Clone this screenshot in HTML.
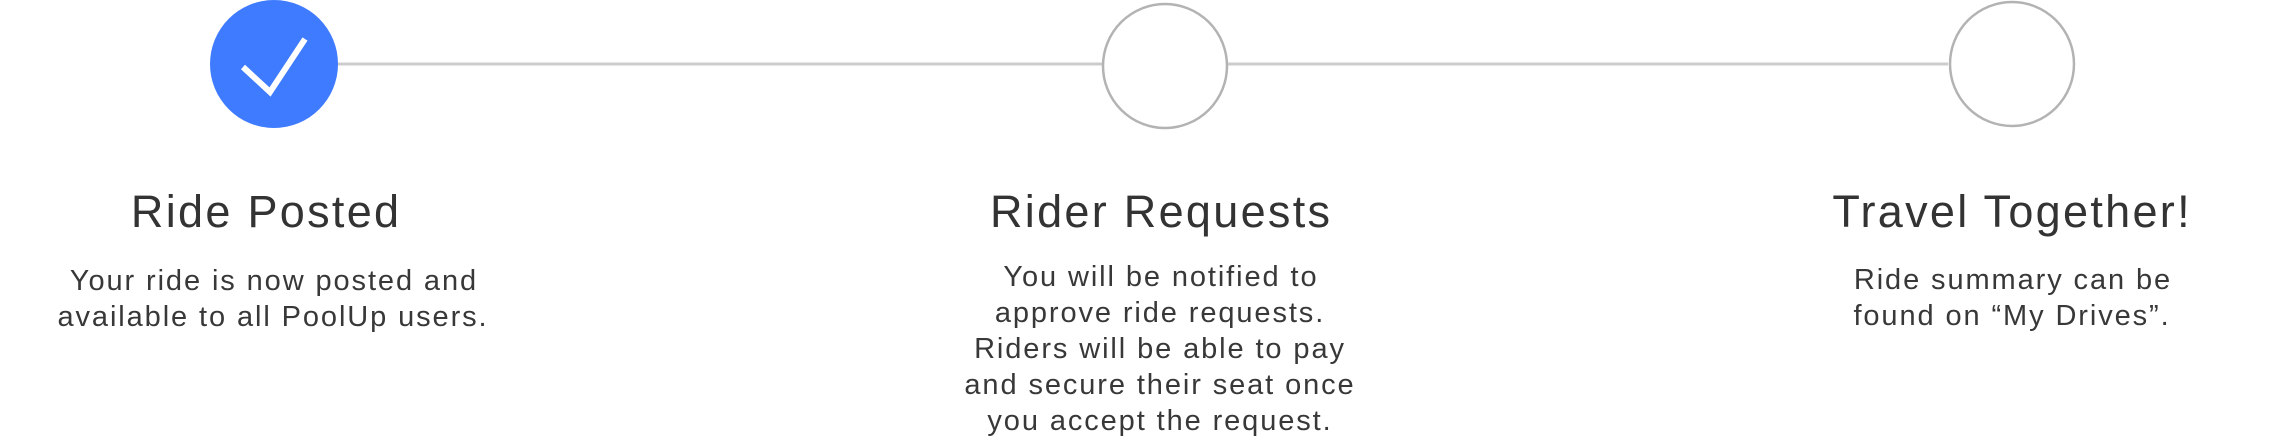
<!DOCTYPE html>
<html><head><meta charset="utf-8"><style>
html,body{margin:0;padding:0;background:#fff;width:2277px;height:447px;overflow:hidden;position:relative;font-family:"Liberation Sans",sans-serif;color:#333}
.t{position:absolute;width:700px;text-align:center;font-size:45px;line-height:50px;letter-spacing:2.3px;text-indent:2.3px}
.b{position:absolute;width:700px;text-align:center;font-size:29px;line-height:36px;letter-spacing:1.9px;text-indent:1.9px;color:#383838}
</style></head><body>
<svg width="2277" height="447" style="position:absolute;left:0;top:0">
<line x1="338" y1="64" x2="1102" y2="64" stroke="#cccccc" stroke-width="3"/>
<line x1="1228" y1="64" x2="1948" y2="64" stroke="#cccccc" stroke-width="3"/>
<circle cx="274" cy="64" r="64" fill="#3f7bff"/>
<path d="M243 67 L270 92 L305 39" fill="none" stroke="#fff" stroke-width="6"/>
<circle cx="1165" cy="66" r="62" fill="#fff" stroke="#b3b3b3" stroke-width="2.5"/>
<circle cx="2012" cy="64" r="62" fill="#fff" stroke="#b3b3b3" stroke-width="2.5"/>
</svg>
<div class="t" style="left:-85px;top:187px">Ride Posted</div>
<div class="b" style="left:-77px;top:263px">Your ride is now posted and<br>available to all PoolUp users.</div>
<div class="t" style="left:810px;top:187px">Rider Requests</div>
<div class="b" style="left:810px;top:259px">You will be notified to<br>approve ride requests.<br>Riders will be able to pay<br>and secure their seat once<br>you accept the request.</div>
<div class="t" style="left:1661px;top:187px">Travel Together!</div>
<div class="b" style="left:1662px;top:262px">Ride summary can be<br>found on “My Drives”.</div>
</body></html>
